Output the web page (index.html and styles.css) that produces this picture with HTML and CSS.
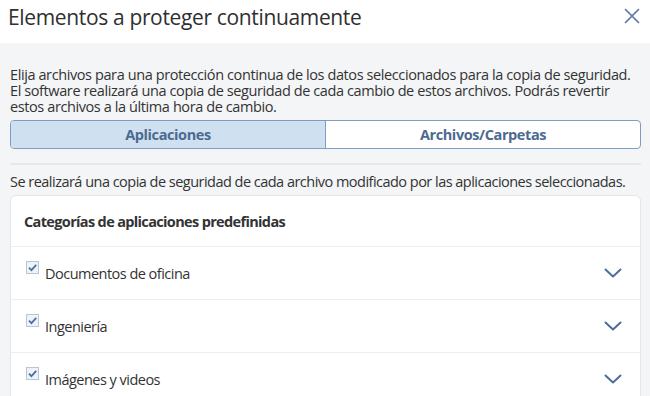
FILE: index.html
```html
<!DOCTYPE html>
<html lang="es">
<head>
<meta charset="utf-8">
<link rel="stylesheet" href="styles.css">
</head>
<body>
<div class="dialog">
  <header class="header">
    <h1 class="title">Elementos a proteger continuamente</h1>
    <button class="close" aria-label="Cerrar">
      <svg width="16" height="16" viewBox="0 0 16 16"><path d="M1.5 1.5 L14.5 14.5 M14.5 1.5 L1.5 14.5" stroke="#5a78a0" stroke-width="1.7" fill="none" stroke-linecap="round"/></svg>
    </button>
  </header>
  <main class="content">
    <p class="intro">Elija archivos para una protección continua de los datos seleccionados para la copia de seguridad.<br>El software realizará una copia de seguridad de cada cambio de estos archivos. Podrás revertir<br>estos archivos a la última hora de cambio.</p>
    <div class="tabs">
      <div class="tab active">Aplicaciones</div>
      <div class="tab">Archivos/Carpetas</div>
    </div>
    <div class="sep"></div>
    <p class="note">Se realizará una copia de seguridad de cada archivo modificado por las aplicaciones seleccionadas.</p>
    <section class="card">
      <div class="card-head">Categorías de aplicaciones predefinidas</div>
      <div class="row">
        <span class="check"><svg width="11" height="11" viewBox="0 0 10 10"><path d="M1.8 5.2 L4 7.4 L8.4 2.6" stroke="#4d6f9c" stroke-width="1.6" fill="none"/></svg></span>
        <span class="label">Documentos de oficina</span>
        <svg class="chev" width="18" height="10" viewBox="0 0 18 10"><path d="M1.5 1.5 L9 8.5 L16.5 1.5" stroke="#4f6e97" stroke-width="2" fill="none" stroke-linecap="round" stroke-linejoin="round"/></svg>
      </div>
      <div class="row">
        <span class="check"><svg width="11" height="11" viewBox="0 0 10 10"><path d="M1.8 5.2 L4 7.4 L8.4 2.6" stroke="#4d6f9c" stroke-width="1.6" fill="none"/></svg></span>
        <span class="label">Ingeniería</span>
        <svg class="chev" width="18" height="10" viewBox="0 0 18 10"><path d="M1.5 1.5 L9 8.5 L16.5 1.5" stroke="#4f6e97" stroke-width="2" fill="none" stroke-linecap="round" stroke-linejoin="round"/></svg>
      </div>
      <div class="row">
        <span class="check"><svg width="11" height="11" viewBox="0 0 10 10"><path d="M1.8 5.2 L4 7.4 L8.4 2.6" stroke="#4d6f9c" stroke-width="1.6" fill="none"/></svg></span>
        <span class="label">Imágenes y videos</span>
        <svg class="chev" width="18" height="10" viewBox="0 0 18 10"><path d="M1.5 1.5 L9 8.5 L16.5 1.5" stroke="#4f6e97" stroke-width="2" fill="none" stroke-linecap="round" stroke-linejoin="round"/></svg>
      </div>
    </section>
  </main>
</div>
</body>
</html>
```
FILE: styles.css
```css
* { box-sizing: border-box; }
html, body { margin: 0; height: 100%; }
body {
  font-family: "Open Sans", "Noto Sans", sans-serif;
  font-size: 14.5px;
  letter-spacing: -0.52px;
  color: #333;
  background: #f4f5f7;
  overflow: hidden;
}
.dialog { height: 396px; }
.header {
  height: 43px;
  background: #fff;
  display: flex;
  align-items: flex-start;
  justify-content: space-between;
  padding: 4px 10px 0 8px;
}
.title {
  margin: 0;
  font-weight: 400;
  font-size: 21px;
  letter-spacing: -0.35px;
  line-height: 26px;
  color: #2f2f2f;
}
.close {
  border: 0;
  background: none;
  padding: 0;
  margin-top: 4px;
  width: 16px;
  height: 16px;
  display: flex;
}
.content { padding: 24px 9px 0 10px; }
.intro {
  margin: 0;
  line-height: 16px;
  letter-spacing: -0.4px;
  white-space: nowrap;
}
.tabs {
  margin-top: 5px;
  height: 29px;
  display: flex;
  border: 1px solid #7f9cc1;
  border-radius: 4px;
  overflow: hidden;
  background: #fff;
}
.tab {
  flex: 1;
  display: flex;
  align-items: center;
  justify-content: center;
  font-weight: 700;
  color: #4d6a90;
  letter-spacing: -0.4px;
}
.tab.active {
  background: #cfe0f1;
  border-right: 1.5px solid #7f9cc1;
}
.sep {
  margin-top: 14px;
  height: 2px;
  background: #e5e8ec;
}
.note {
  margin: 9px 0 0;
  line-height: 16px;
}
.card {
  margin-top: 5px;
  background: #fff;
  border: 1px solid #e2e5ea;
  border-radius: 6px;
}
.card-head {
  height: 51px;
  display: flex;
  align-items: center;
  padding-left: 13px;
  font-weight: 700;
  letter-spacing: -0.65px;
  border-bottom: 1px solid #eceef2;
}
.row {
  height: 53px;
  display: flex;
  align-items: center;
  padding: 0 18px 0 15px;
  border-bottom: 1px solid #eceef2;
}
.check {
  width: 13px;
  height: 13px;
  border: 1px solid #b9c5d5;
  background: #eef3f9;
  display: flex;
  align-items: center;
  justify-content: center;
  margin-right: 6px;
  margin-top: -12px;
}
.label { flex: 1; }
.chev { display: block; }
```
